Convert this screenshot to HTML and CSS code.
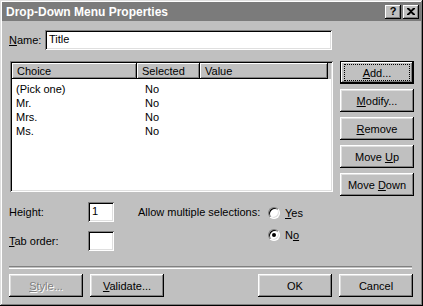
FILE: index.html
```html
<!DOCTYPE html>
<html lang="en">
<head>
    <meta charset="UTF-8">
    <title>Drop-Down Menu Properties</title>
    <link rel="stylesheet" href="styles.css">
</head>
<body>
<div class="window">
    <!-- Title bar -->
    <div class="titlebar">
        <span class="title">Drop-Down Menu Properties</span>
        <div class="title-buttons">
            <span class="tbtn">?</span>
            <span class="tbtn close">
                <svg width="8" height="7" viewBox="0 0 8 7"><path d="M0 0h2l2 2 2-2h2v1L5 3.5 8 6v1H6L4 5 2 7H0V6l3-2.5L0 1z" fill="#000"/></svg>
            </span>
        </div>
    </div>

    <div class="content">
        <!-- Name -->
        <div class="name-row">
            <label class="lbl name-lbl"><u>N</u>ame:</label>
            <div class="field name-field">Title</div>
        </div>

        <!-- List and buttons -->
        <div class="main-row">
            <div class="listbox">
                <div class="list-head">
                    <span class="hcell c1">Choice</span>
                    <span class="hcell c2">Selected</span>
                    <span class="hcell c3">Value</span>
                </div>
                <div class="list-rows">
                    <div class="lrow"><span class="c1">(Pick one)</span><span class="c2">No</span></div>
                    <div class="lrow"><span class="c1">Mr.</span><span class="c2">No</span></div>
                    <div class="lrow"><span class="c1">Mrs.</span><span class="c2">No</span></div>
                    <div class="lrow"><span class="c1">Ms.</span><span class="c2">No</span></div>
                </div>
            </div>
            <div class="side-buttons">
                <button class="btn default"><span class="focus"><u>A</u>dd...</span></button>
                <button class="btn"><u>M</u>odify...</button>
                <button class="btn"><u>R</u>emove</button>
                <button class="btn">Move <u>U</u>p</button>
                <button class="btn">Move <u>D</u>own</button>
            </div>
        </div>

        <!-- Options -->
        <div class="options">
            <div class="opt-left">
                <div class="opt-row">
                    <label class="lbl opt-lbl">Hei<u>g</u>ht:</label>
                    <div class="field small-field">1</div>
                </div>
                <div class="opt-row">
                    <label class="lbl opt-lbl"><u>T</u>ab order:</label>
                    <div class="field small-field"></div>
                </div>
            </div>
            <div class="opt-multi">
                <span class="lbl multi-lbl">Allow multiple selections:</span>
                <div class="radios">
                    <label class="radio"><span class="dot"></span><span><u>Y</u>es</span></label>
                    <label class="radio"><span class="dot checked"></span><span>N<u>o</u></span></label>
                </div>
            </div>
        </div>

        <div class="separator"></div>

        <!-- Bottom buttons -->
        <div class="bottom-row">
            <div class="group">
                <button class="btn disabled"><u>S</u>tyle...</button>
                <button class="btn"><u>V</u>alidate...</button>
            </div>
            <div class="group">
                <button class="btn">OK</button>
                <button class="btn">Cancel</button>
            </div>
        </div>
    </div>
</div>
</body>
</html>
```

FILE: styles.css
```css
body {
    margin: 0;
    background: #c0c0c0;
    font-family: "Liberation Sans", Arial, sans-serif;
    font-size: 11px;
    color: #000;
}

.window {
    width: 423px;
    height: 306px;
    box-sizing: border-box;
    background: #c0c0c0;
    padding: 2px;
    box-shadow: inset -1px -1px #000, inset 1px 1px #dfdfdf, inset -2px -2px #808080, inset 2px 2px #fff;
}

/* Title bar */
.titlebar {
    height: 19px;
    background: #7b7b7b;
    display: flex;
    align-items: center;
    justify-content: space-between;
    padding: 0 2px 0 4px;
}

.title {
    color: #fff;
    font-weight: bold;
    font-size: 12px;
}

.title-buttons {
    display: flex;
    gap: 2px;
}

.tbtn {
    width: 16px;
    height: 14px;
    box-sizing: border-box;
    background: #c0c0c0;
    box-shadow: inset -1px -1px #000, inset 1px 1px #fff, inset -2px -2px #808080;
    display: flex;
    align-items: center;
    justify-content: center;
    font-weight: bold;
    font-size: 11px;
    line-height: 1;
}

/* Content */
.content {
    padding: 9px 7px 0 7px;
}

.lbl u, .btn u, .radio u {
    text-decoration: underline;
}

.field {
    background: #fff;
    box-sizing: border-box;
    height: 20px;
    padding: 3px 4px;
    box-shadow: inset 1px 1px #808080, inset -1px -1px #fff, inset 2px 2px #000, inset -2px -2px #dfdfdf;
}

.name-row {
    display: flex;
    align-items: center;
    height: 20px;
}

.name-lbl {
    width: 36px;
}

.name-field {
    width: 287px;
}

.main-row {
    display: flex;
    margin-top: 11px;
    height: 135px;
}

.listbox {
    width: 323px;
    height: 131px;
    margin-left: 1px;
    box-sizing: border-box;
    background: #fff;
    padding: 2px;
    box-shadow: inset 1px 1px #808080, inset -1px -1px #fff, inset 2px 2px #000, inset -2px -2px #dfdfdf;
}

.list-head {
    display: flex;
    height: 16px;
    background: #c0c0c0;
}

.hcell {
    box-sizing: border-box;
    padding: 2px 0 0 5px;
    height: 16px;
    box-shadow: inset -1px -1px #000, inset 1px 1px #fff, inset -2px -2px #808080;
}

.list-head .c1 { width: 125px; }
.list-head .c2 { width: 63px; }
.list-head .c3 { width: 128px; }

.list-rows {
    padding-top: 3px;
}

.lrow {
    display: flex;
    height: 14px;
    line-height: 14px;
}

.lrow .c1 { width: 129px; padding-left: 4px; }
.lrow .c2 { padding-left: 0; }

.side-buttons {
    display: flex;
    flex-direction: column;
    gap: 5px;
    margin-left: 7px;
}

.btn {
    width: 74px;
    height: 23px;
    border: none;
    background: #c0c0c0;
    font-family: inherit;
    font-size: 11px;
    color: #000;
    padding: 0;
    box-shadow: inset -1px -1px #000, inset 1px 1px #fff, inset -2px -2px #808080, inset 2px 2px #dfdfdf;
}

.btn.default {
    box-shadow: inset 0 0 0 1px #000, inset -2px -2px #000, inset 2px 2px #fff, inset -3px -3px #808080;
    display: flex;
    align-items: center;
    justify-content: center;
}

.focus {
    display: flex;
    align-items: center;
    justify-content: center;
    width: 64px;
    height: 15px;
    outline: 1px dotted #000;
}

.btn.disabled {
    color: #808080;
    text-shadow: 1px 1px #fff;
}

/* Options */
.options {
    display: flex;
    margin-top: 6px;
    height: 49px;
}

.opt-left {
    display: flex;
    flex-direction: column;
    gap: 9px;
}

.opt-row {
    display: flex;
    align-items: center;
    height: 20px;
}

.opt-lbl {
    width: 79px;
}

.small-field {
    width: 26px;
}

.opt-multi {
    display: flex;
    margin-left: 24px;
}

.multi-lbl {
    width: 130px;
    line-height: 20px;
}

.radios {
    display: flex;
    flex-direction: column;
    gap: 2px;
    padding-top: 1px;
}

.radio {
    display: flex;
    align-items: center;
    height: 20px;
    gap: 5px;
}

.dot {
    width: 12px;
    height: 12px;
    box-sizing: border-box;
    border-radius: 50%;
    background: #fff;
    border: 1px solid;
    border-color: #808080 #fff #fff #808080;
    box-shadow: inset 1px 1px #000, inset -1px -1px #dfdfdf;
    position: relative;
}

.dot.checked::after {
    content: "";
    position: absolute;
    left: 3px;
    top: 3px;
    width: 4px;
    height: 4px;
    border-radius: 50%;
    background: #000;
}

.separator {
    margin-top: 15px;
    width: 403px;
    height: 1px;
    border-top: 1px solid #808080;
    border-bottom: 1px solid #fff;
}

.bottom-row {
    display: flex;
    justify-content: space-between;
    margin-top: 5px;
    width: 404px;
}

.group {
    display: flex;
    gap: 7px;
}
```
